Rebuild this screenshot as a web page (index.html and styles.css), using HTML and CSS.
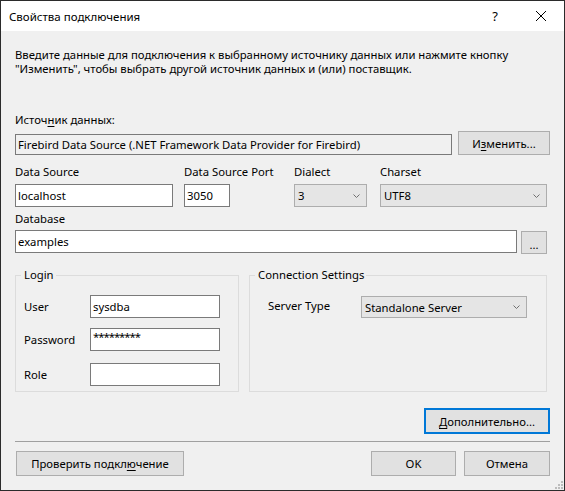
FILE: index.html
```html
<!DOCTYPE html>
<html lang="ru">
<head>
<meta charset="utf-8">
<title>Свойства подключения</title>
<link rel="stylesheet" href="styles.css">
</head>
<body>
<div class="window">
  <div class="titlebar">
    <span class="title">Свойства подключения</span>
    <span class="cap-btn help">?</span>
    <span class="cap-btn close">
      <svg width="10" height="10" viewBox="0 0 10 10"><path d="M0 0L10 10M10 0L0 10" stroke="#000" stroke-width="1" fill="none"/></svg>
    </span>
  </div>
  <div class="client">
    <p class="intro">Введите данные для подключения к выбранному источнику данных или нажмите кнопку<br>"Изменить", чтобы выбрать другой источник данных и (или) поставщик.</p>

    <div class="lbl src-label">Источ<u>н</u>ик данных:</div>
    <div class="src-row">
      <div class="textbox readonly src-box">Firebird Data Source (.NET Framework Data Provider for Firebird)</div>
      <button class="btn btn-change">И<u>з</u>менить...</button>
    </div>

    <div class="params">
      <div class="pcol">
        <div class="lbl">Data Source</div>
        <div class="textbox ctl w-ds">localhost</div>
      </div>
      <div class="pcol">
        <div class="lbl">Data Source Port</div>
        <div class="textbox ctl w-port">3050</div>
      </div>
      <div class="pcol">
        <div class="lbl">Dialect</div>
        <div class="combo ctl w-dialect"><span>3</span><svg class="chev" width="7" height="4" viewBox="0 0 7 4"><path d="M0.5 0.5L3.5 3.5L6.5 0.5" stroke="#707070" fill="none"/></svg></div>
      </div>
      <div class="pcol">
        <div class="lbl">Charset</div>
        <div class="combo ctl w-charset"><span>UTF8</span><svg class="chev" width="7" height="4" viewBox="0 0 7 4"><path d="M0.5 0.5L3.5 3.5L6.5 0.5" stroke="#707070" fill="none"/></svg></div>
      </div>
    </div>

    <div class="lbl db-label">Database</div>
    <div class="db-row">
      <div class="textbox db-box">examples</div>
      <button class="btn btn-browse">...</button>
    </div>

    <div class="groups">
      <fieldset class="group login">
        <legend>Login</legend>
        <div class="frow r-user"><span class="flbl">User</span><div class="textbox fbox">sysdba</div></div>
        <div class="frow r-pass"><span class="flbl">Password</span><div class="textbox fbox pass">*********</div></div>
        <div class="frow r-role"><span class="flbl">Role</span><div class="textbox fbox"></div></div>
      </fieldset>
      <fieldset class="group conn">
        <legend>Connection Settings</legend>
        <div class="frow r-server"><span class="slbl">Server Type</span><div class="combo sbox"><span>Standalone Server</span><svg class="chev" width="7" height="4" viewBox="0 0 7 4"><path d="M0.5 0.5L3.5 3.5L6.5 0.5" stroke="#707070" fill="none"/></svg></div></div>
      </fieldset>
    </div>

    <div class="adv-row">
      <button class="btn btn-adv"><u>Д</u>ополнительно...</button>
    </div>

    <div class="sep"></div>

    <div class="bottom-row">
      <button class="btn btn-test">Проверить подкл<u>ю</u>чение</button>
      <span class="spacer"></span>
      <button class="btn btn-ok">OK</button>
      <button class="btn btn-cancel">Отмена</button>
    </div>
  </div>
  <svg class="grip" width="9" height="9" viewBox="0 0 9 9">
    <rect x="7" y="1" width="2" height="2" fill="#bcbcbc"/>
    <rect x="4" y="4" width="2" height="2" fill="#bcbcbc"/>
    <rect x="7" y="4" width="2" height="2" fill="#bcbcbc"/>
    <rect x="1" y="7" width="2" height="2" fill="#bcbcbc"/>
    <rect x="4" y="7" width="2" height="2" fill="#bcbcbc"/>
    <rect x="7" y="7" width="2" height="2" fill="#bcbcbc"/>
  </svg>
</div>
</body>
</html>
```

FILE: styles.css
```css
* { box-sizing: border-box; }
html, body { margin: 0; padding: 0; }
body {
  width: 565px;
  height: 491px;
  overflow: hidden;
  font-family: "Noto Sans", "Open Sans", sans-serif;
  font-size: 11.3px;
  color: #000;
  background: #fff;
}
.window {
  position: relative;
  width: 565px;
  height: 491px;
  border: 1px solid #2b2b2b;
  background: #f0f0f0;
  display: flex;
  flex-direction: column;
  overflow: hidden;
}
.titlebar {
  flex: none;
  height: 30px;
  background: #fff;
  display: flex;
  align-items: center;
}
.title {
  flex: 1;
  padding-left: 8px;
  font-size: 11.5px;
  white-space: nowrap;
}
.cap-btn {
  width: 46px;
  height: 30px;
  display: flex;
  align-items: center;
  justify-content: center;
}
.help { font-size: 13px; }

.client {
  flex: 1;
  padding: 0 14px;
  display: flex;
  flex-direction: column;
}
.intro {
  margin: 17px 0 0;
  line-height: 14px;
  white-space: nowrap;
}
.lbl {
  height: 14px;
  line-height: 14px;
  white-space: nowrap;
}
u { text-decoration-thickness: 1px; text-underline-offset: 2px; }

.textbox {
  background: #fff;
  border: 1px solid #7a7a7a;
  padding-left: 2px;
  white-space: nowrap;
  overflow: hidden;
}
.textbox.readonly { background: #f0f0f0; }
.combo {
  background: #e5e5e5;
  border: 1px solid #adadad;
  padding-left: 3px;
  display: flex;
  align-items: center;
  white-space: nowrap;
}
.chev { margin-left: auto; margin-right: 6px; flex: none; }

.btn {
  font: inherit;
  color: #000;
  padding: 0;
  margin: 0;
  background: #e1e1e1;
  border: 1px solid #adadad;
  white-space: nowrap;
}

.src-label { margin-top: 37px; }
.src-row { display: flex; align-items: flex-start; margin-top: 4px; }
.src-box { width: 437px; height: 21px; line-height: 19px; margin-top: 3px; }
.btn-change { width: 92px; height: 24px; margin-left: 6px; }

.params {
  display: grid;
  grid-template-columns: 169px 110px 86px 167px;
  margin-top: 10px;
}
.ctl { margin-top: 5px; height: 23px; line-height: 21px; }
.w-ds { width: 158px; }
.w-port { width: 46px; }
.w-dialect { width: 73px; }
.w-charset { width: 167px; }

.db-label { margin-top: 5px; }
.db-row { display: flex; align-items: flex-start; margin-top: 4px; }
.db-box { width: 502px; height: 23px; line-height: 21px; }
.btn-browse { width: 26px; height: 23px; margin-left: 4px; margin-top: 1px; line-height: 14px; padding-top: 4px; }

.groups {
  display: flex;
  gap: 10px;
  margin-top: 14px;
}
.group {
  margin: 0;
  padding: 0;
  min-inline-size: 0;
  height: 124px;
  border: 1px solid #dcdcdc;
}
.group legend {
  margin-left: 5px;
  padding: 0 2px 0 3px;
  line-height: 14px;
  height: 14px;
}
.login { width: 224px; }
.conn { width: 298px; }
.frow { display: flex; align-items: center; }
.flbl { width: 66px; margin-left: 8px; padding-bottom: 1px; }
.fbox { width: 130px; height: 23px; line-height: 21px; }
.fbox.pass { line-height: 16px; letter-spacing: -1px; }
.r-user { margin-top: 13px; }
.r-pass { margin-top: 10px; }
.r-role { margin-top: 12px; }
.r-server { margin-top: 14px; }
.slbl { width: 93px; margin-left: 18px; padding-bottom: 4px; }
.sbox { width: 166px; height: 22px; }

.adv-row { display: flex; justify-content: flex-end; margin-top: 16px; }
.btn-adv { width: 126px; height: 26px; border: 2px solid #0078d7; }

.sep { height: 1px; background: #a0a0a0; margin-top: 7px; }

.bottom-row { display: flex; margin-top: 9px; }
.btn-test { width: 168px; height: 25px; margin-left: 1px; }
.spacer { flex: 1; }
.btn-ok { width: 85px; height: 25px; }
.btn-cancel { width: 86px; height: 25px; margin-left: 8px; }

.grip { position: absolute; right: 1px; bottom: 1px; }
```
